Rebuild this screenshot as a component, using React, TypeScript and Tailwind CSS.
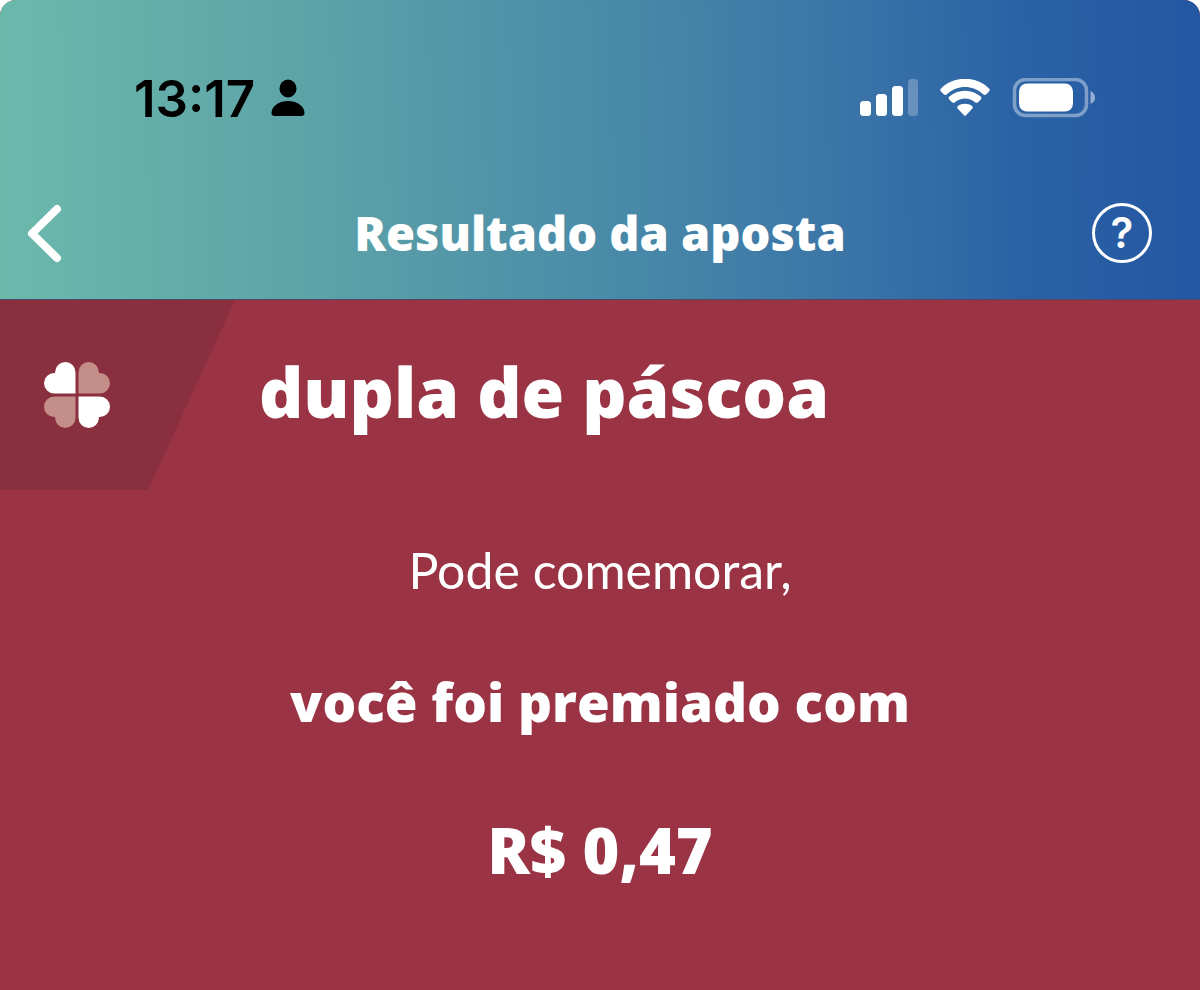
const Clover = () => (
  <svg className="w-[66px] h-[66px]" viewBox="0 0 66 66" aria-hidden="true">
    <path d="M31.500 31.500V10.200A10.200 10.200 0 0 0 11.100 10.200V11.100H10.200A10.200 10.200 0 0 0 10.200 31.500Z" fill="#fff" />
    <path d="M34.500 31.500V10.200A10.200 10.200 0 0 1 54.900 10.200V11.100H55.800A10.200 10.200 0 0 1 55.800 31.500Z" fill="#c38d88" />
    <path d="M31.500 34.500V55.800A10.200 10.200 0 0 1 11.100 55.800V54.900H10.200A10.200 10.200 0 0 1 10.200 34.500Z" fill="#c38d88" />
    <path d="M34.500 34.500V55.800A10.200 10.200 0 0 0 54.900 55.800V54.900H55.800A10.200 10.200 0 0 0 55.800 34.500Z" fill="#fff" />
  </svg>
)

const StatusBar = () => (
  <div className="flex items-center justify-between h-[196px] pl-[134px] pr-[104px]">
    <div className="flex items-center gap-4 text-black">
      <span className="font-['Inter',sans-serif] text-[51px] font-semibold leading-none">13:17</span>
      <svg className="w-[34px] h-[38px]" viewBox="0 0 34 38" fill="currentColor" aria-hidden="true">
        <ellipse cx="17" cy="9.500" rx="8.500" ry="9" />
        <path d="M4 37C1.500 37 .5 36 .5 34C.5 28 7 22 17 22S33.500 28 33.500 34C33.500 36 32.500 37 30 37Z" />
      </svg>
    </div>

    <div className="flex items-center gap-[22px] text-white">
      {/* Signal */}
      <svg className="w-[58px] h-[38px]" viewBox="0 0 58 38" fill="currentColor" aria-hidden="true">
        <rect x="0" y="22" width="11" height="15" rx="3.500" />
        <rect x="16" y="15" width="11" height="22" rx="3.500" />
        <rect x="32" y="7" width="11" height="30" rx="3.500" />
        <rect x="48" y="0" width="10" height="37" rx="3.500" opacity=".25" />
      </svg>
      {/* Wifi */}
      <svg className="w-[50px] h-[38px]" viewBox="0 0 50 38" fill="currentColor" aria-hidden="true">
        <path d="M1 9.500C14-3.500 36-3.500 49 9.500Q50.500 11 49 12.500L46 15.500Q44.500 16.500 43 15.200C32.500 5.600 17.500 5.600 7 15.200Q5.500 16.500 4 15.500L1 12.500Q-.5 11 1 9.500Z" />
        <path d="M9 17.800C18 9.800 32 9.800 41 17.800Q42 19 41 20.200L38 23.200Q36.500 24.500 35 23.200C29 18.200 21 18.200 15 23.200Q13.500 24.500 12 23.200L9 20.200Q8 19 9 17.800Z" />
        <path d="M17.800 27C22 24 28 24 32.200 27Q33.500 28.300 32.200 29.700L26 36.300Q25 37.300 24 36.300L17.800 29.700Q16.500 28.300 17.800 27Z" />
      </svg>
      {/* Battery */}
      <svg className="w-[84px] h-[40px]" viewBox="0 0 84 40" fill="currentColor" aria-hidden="true">
        <rect x="2.500" y="1.500" width="72" height="36" rx="11" fill="none" stroke="currentColor" strokeWidth="3.500" opacity=".4" />
        <rect x="7" y="5.500" width="54" height="28" rx="8" />
        <path d="M78.500 13Q83 15 83 19.500T78.500 26Z" opacity=".5" />
      </svg>
    </div>
  </div>
)

const NavBar = () => (
  <nav className="grid grid-cols-[1fr_auto_1fr] items-center h-[74px] px-6 mb-[29px] text-white">
    <button type="button" aria-label="Voltar" className="justify-self-start">
      <svg className="w-10 h-[60px]" viewBox="0 0 40 60" fill="none" stroke="currentColor" strokeWidth="8" strokeLinecap="round" strokeLinejoin="round" aria-hidden="true">
        <path d="M33 6L8 30.500L33 55" />
      </svg>
    </button>
    <h1 className="text-[47px] font-extrabold leading-none">Resultado da aposta</h1>
    <button
      type="button"
      aria-label="Ajuda"
      className="justify-self-end mr-6 flex items-center justify-center w-[60px] h-[60px] rounded-full border-3 border-white font-['Inter',sans-serif] text-[42px] font-semibold leading-none"
    >
      ?
    </button>
  </nav>
)

export default function App() {
  return (
    <div className="min-h-screen overflow-hidden rounded-t-[16px] bg-[#9a3445] font-['Open_Sans',sans-serif] text-white">
      <header className="border-b border-[#4b4969] bg-[linear-gradient(89deg,#6cb9ac_0%,#5ca2a8_27%,#4a8ba8_50%,#3b75a7_70%,#2b62a6_85%,#2457a2_100%)]">
        <StatusBar />
        <NavBar />
      </header>

      <main>
        <div className="flex items-center h-[190px]">
          <div className="flex items-center w-[235px] h-full pl-[44px] bg-[#8a2f3e] [clip-path:polygon(0_0,100%_0,63%_100%,0_100%)]">
            <Clover />
          </div>
          <h2 className="pl-6 pb-2 text-[69px] font-extrabold leading-none">dupla de páscoa</h2>
        </div>

        <div className="flex flex-col items-center text-center pt-[48px]">
          <p className="font-['Lato',sans-serif] text-[50px] leading-[64px]">Pode comemorar,</p>
          <p className="mt-[68px] text-[53px] font-extrabold leading-[64px]">você foi premiado com</p>
          <p className="mt-[84px] text-[63px] font-extrabold leading-[64px]">R$ 0,47</p>
        </div>
      </main>
    </div>
  )
}
